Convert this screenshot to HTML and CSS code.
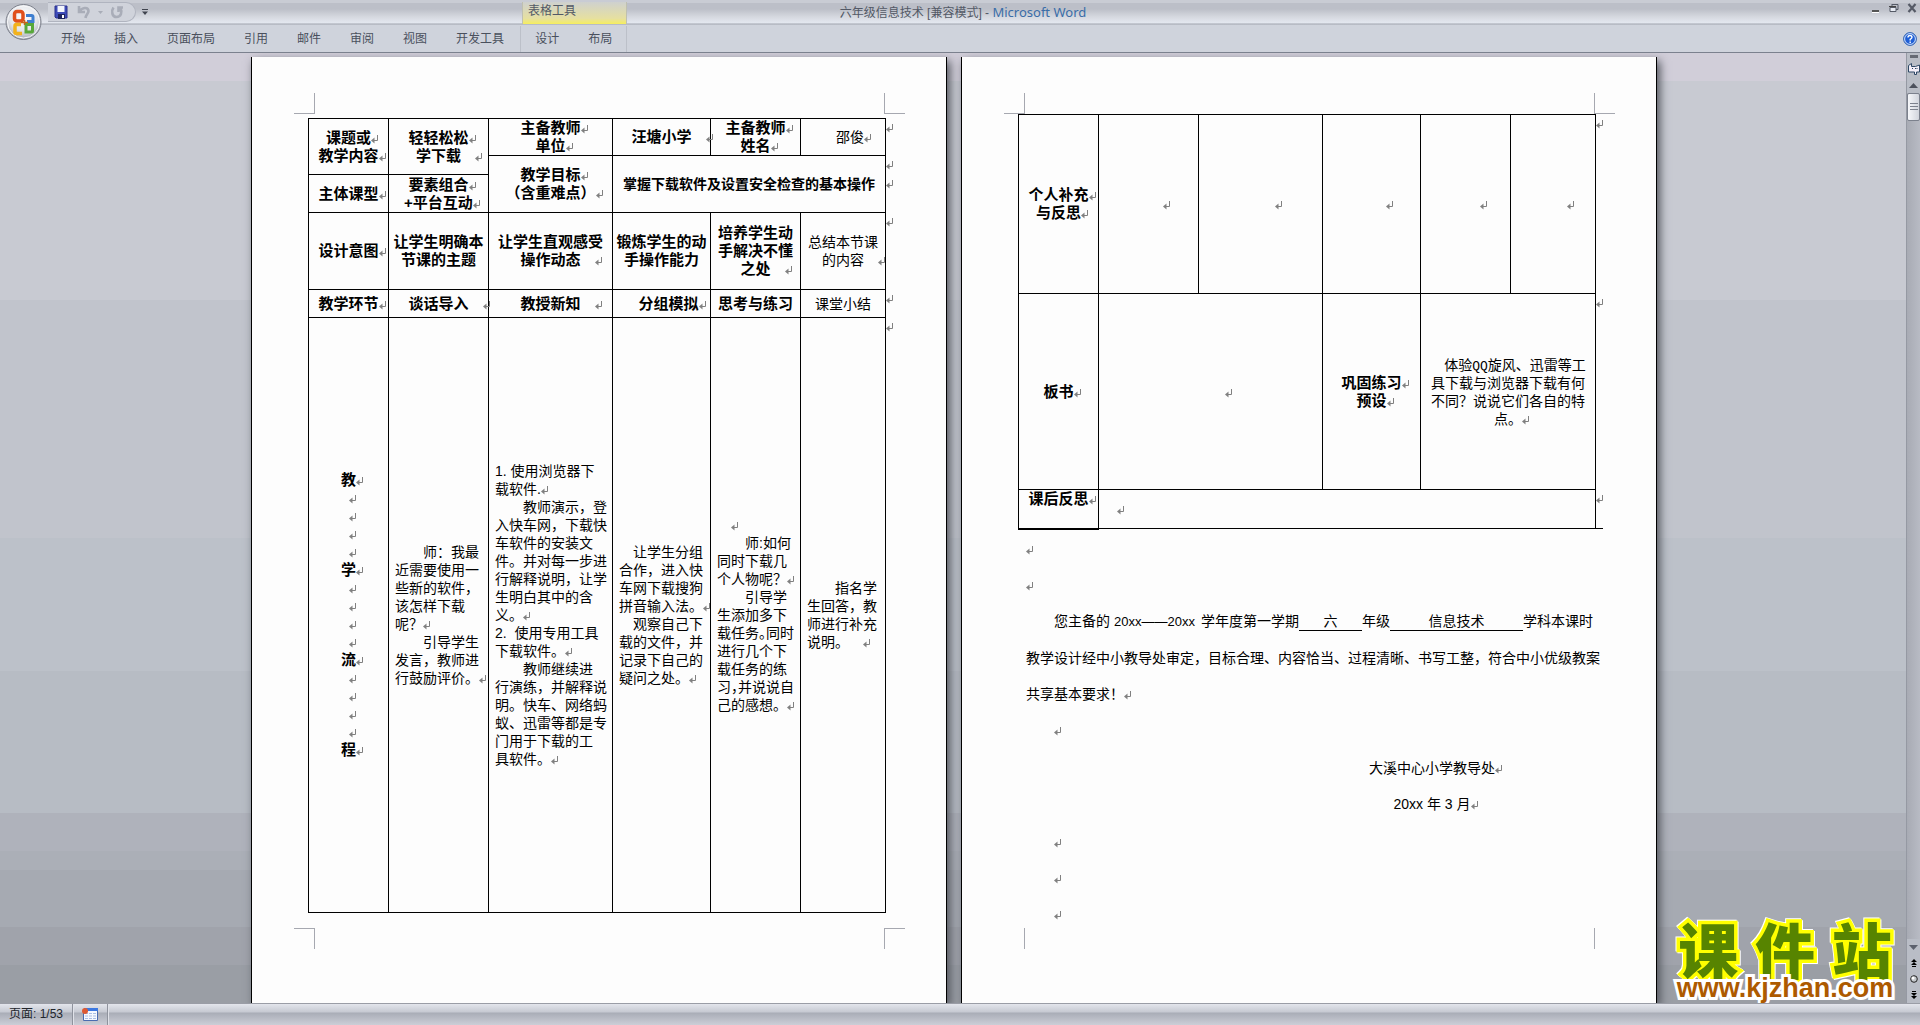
FILE: index.html
```html
<!DOCTYPE html>
<html lang="zh-CN">
<head>
<meta charset="utf-8">
<title>六年级信息技术 [兼容模式] - Microsoft Word</title>
<link rel="stylesheet" href="styles.css">
</head>
<body>
<svg class="defs" aria-hidden="true">
  <symbol id="ret" viewBox="0 0 8 9"><path d="M6.5 0V5.5H3" fill="none" stroke="#808080"/><path d="M0 5.5L3.500 2.500V8.500Z" fill="#808080"/></symbol>
</svg>

<header class="ribbon">
  <button class="office" aria-label="Office 按钮">
    <svg viewBox="0 0 38 38">
      <defs><radialGradient id="orb" cx=".5" cy=".35" r=".65"><stop offset="0" stop-color="#fff"/><stop offset=".6" stop-color="#e4e6eb"/><stop offset="1" stop-color="#a4a8b2"/></radialGradient></defs>
      <circle cx="18.500" cy="19" r="17.500" fill="url(#orb)" stroke="#7d818c"/>
      <circle cx="18.500" cy="19" r="16" fill="none" stroke="#f7f8fa"/>
      <g fill="none">
        <rect x="9.500" y="8.500" width="8.500" height="9.500" rx="2.500" stroke="#e0501c" stroke-width="3.500"/>
        <path d="M21 12.500h5.500q1.500 0 1.500 1.500V18.500h-6" stroke="#3f7fd0" stroke-width="3"/>
        <path d="M21 21.500h6.500v6.500q0 1-1 1H21z" stroke="#58a83a" stroke-width="3"/>
        <path d="M16 21.500h-4.500q-1.500 0-1.500 1.500v6q0 1.500 1.500 1.500h5.500" stroke="#f2b21c" stroke-width="3.500"/>
      </g>
      <path d="M19.500 17v5M16 19.500h7" stroke="#c8641e" stroke-width="1.500"/>
    </svg>
  </button>
  <div class="titlebar">
    <div class="quick">
      <button aria-label="保存"><svg width="14" height="14" viewBox="0 0 14 14"><path d="M1 1h12v12H2l-1-1z" fill="#3d4bb8" stroke="#2a318c"/><path d="M3.500 1h7v6h-7z" fill="#f2f5fc"/><path d="M4 9h7v5H4z" fill="#1d2460"/><path d="M8 10h2v3H8z" fill="#fff"/></svg></button>
      <button aria-label="撤消"><svg width="14" height="14" viewBox="0 0 14 14"><path d="M2 1v6h6M2.500 6.500C5 2.500 11 1.500 11.500 6 11.500 8.500 9 9.500 8.500 13" fill="none" stroke="#a9adb8" stroke-width="2.600"/></svg></button>
      <svg class="caret" width="5" height="3" viewBox="0 0 5 3"><path d="M0 0h5L2.500 3z" fill="#a9adb8"/></svg>
      <button aria-label="重复"><svg width="14" height="14" viewBox="0 0 14 14"><path d="M3.500 2.500C1 6 2 12 6.500 12S12.500 7 10.500 3M13 2.500H8.500V7" fill="none" stroke="#a9adb8" stroke-width="2.600"/></svg></button>
    </div>
    <button class="more" aria-label="自定义快速访问工具栏"><svg width="6" height="6" viewBox="0 0 6 6"><path d="M0 0h6v1H0zM0 2.500h6L3 6z" fill="#40444f"/></svg></button>
    <div class="context">表格工具</div>
    <h1 class="caption">六年级信息技术 [兼容模式] - <span>Microsoft Word</span></h1>
    <div class="winbtns">
      <button aria-label="最小化"><svg width="10" height="10" viewBox="0 0 10 10"><path d="M1 7h7v2H1z" fill="#555"/><path d="M1 9.500h7" stroke="#fff"/></svg></button>
      <button aria-label="还原"><svg width="10" height="10" viewBox="0 0 10 10"><path d="M3 1.500h6v5H7M3 3V1" fill="none" stroke="#555a66"/><path d="M1 4.500h6v4H1z" fill="#e8ecf4" stroke="#555a66"/><path d="M0 3.500h7" stroke="#444" /></svg></button>
      <button aria-label="关闭"><svg width="10" height="10" viewBox="0 0 10 10"><path d="M1.500 1l7 8M8.500 1l-7 8" stroke="#555a66" stroke-width="2.200"/></svg></button>
    </div>
  </div>
  <nav class="tabs">
    <button>开始</button><button>插入</button><button>页面布局</button><button>引用</button><button>邮件</button><button>审阅</button><button>视图</button><button>开发工具</button>
    <span class="ctxtabs"><button>设计</button><button>布局</button></span>
    <button class="help" aria-label="帮助"><svg width="14" height="14" viewBox="0 0 14 14"><circle cx="7" cy="7" r="6.400" fill="#1f5fd6" stroke="#3a68b0"/><circle cx="7" cy="7" r="5.400" fill="none" stroke="#d6e4fa"/><path d="M5 5.500Q5 3.500 7 3.500T9 5.300Q9 6.300 7.200 7.300V8.500M7.200 9.500v1.500" fill="none" stroke="#fff" stroke-width="1.400"/></svg></button>
  </nav>
</header>

<main class="workspace">
  <div class="desk">
    <section class="page">
      <i class="crop tl"></i><i class="crop tr"></i><i class="crop bl"></i><i class="crop br"></i>
      <table class="plan plan-a">
        <colgroup><col class="c80"><col class="c100"><col class="c124"><col class="c98"><col class="c90"><col class="c85"><col class="c7"></colgroup>
        <tr class="r37">
          <th rowspan="2">课题或<svg class="ret"><use href="#ret"/></svg><br>教学内容<svg class="ret"><use href="#ret"/></svg></th>
          <th rowspan="2">轻轻松松<svg class="ret"><use href="#ret"/></svg><br>学下载<svg class="ret far"><use href="#ret"/></svg></th>
          <th>主备教师<svg class="ret"><use href="#ret"/></svg><br>单位<svg class="ret"><use href="#ret"/></svg></th>
          <th>汪塘小学<svg class="ret far"><use href="#ret"/></svg></th>
          <th>主备教师<svg class="ret"><use href="#ret"/></svg><br>姓名<svg class="ret"><use href="#ret"/></svg></th>
          <td class="mid in">邵俊<svg class="ret"><use href="#ret"/></svg></td>
          <td class="end"><svg class="ret"><use href="#ret"/></svg></td>
        </tr>
        <tr class="r19">
          <th rowspan="2">教学目标<svg class="ret"><use href="#ret"/></svg><br>（含重难点）<svg class="ret"><use href="#ret"/></svg></th>
          <th rowspan="2" colspan="3" class="goal">掌握下载软件及设置安全检查的基本操作</th>
          <td class="end"><svg class="ret"><use href="#ret"/></svg></td>
        </tr>
        <tr class="r38">
          <th>主体课型<svg class="ret"><use href="#ret"/></svg></th>
          <th>要素组合<svg class="ret"><use href="#ret"/></svg><br>+平台互动<svg class="ret"><use href="#ret"/></svg></th>
          <td class="end"><svg class="ret"><use href="#ret"/></svg></td>
        </tr>
        <tr class="r77">
          <th>设计意图<svg class="ret"><use href="#ret"/></svg></th>
          <th>让学生明确本<br>节课的主题</th>
          <th>让学生直观感受<br>操作动态<svg class="ret far"><use href="#ret"/></svg></th>
          <th>锻炼学生的动<br>手操作能力</th>
          <th>培养学生动<br>手解决不懂<br>之处<svg class="ret far"><use href="#ret"/></svg></th>
          <td class="mid">总结本节课<br>的内容<svg class="ret far"><use href="#ret"/></svg></td>
          <td class="end"><svg class="ret"><use href="#ret"/></svg></td>
        </tr>
        <tr class="r28">
          <th>教学环节<svg class="ret"><use href="#ret"/></svg></th>
          <th>谈话导入<svg class="ret far"><use href="#ret"/></svg></th>
          <th>教授新知<svg class="ret far"><use href="#ret"/></svg></th>
          <th class="in">分组模拟<svg class="ret"><use href="#ret"/></svg></th>
          <th>思考与练习</th>
          <td class="mid">课堂小结</td>
          <td class="end"><svg class="ret"><use href="#ret"/></svg></td>
        </tr>
        <tr class="r595">
          <th>教<svg class="ret"><use href="#ret"/></svg><br><svg class="ret"><use href="#ret"/></svg><br><svg class="ret"><use href="#ret"/></svg><br><svg class="ret"><use href="#ret"/></svg><br><svg class="ret"><use href="#ret"/></svg><br>学<svg class="ret"><use href="#ret"/></svg><br><svg class="ret"><use href="#ret"/></svg><br><svg class="ret"><use href="#ret"/></svg><br><svg class="ret"><use href="#ret"/></svg><br><svg class="ret"><use href="#ret"/></svg><br>流<svg class="ret"><use href="#ret"/></svg><br><svg class="ret"><use href="#ret"/></svg><br><svg class="ret"><use href="#ret"/></svg><br><svg class="ret"><use href="#ret"/></svg><br><svg class="ret"><use href="#ret"/></svg><br>程<svg class="ret"><use href="#ret"/></svg></th>
          <td><p class="i2">师：我最<br>近需要使用一<br>些新的软件，<br>该怎样下载<br>呢？<svg class="ret"><use href="#ret"/></svg></p><p class="i2">引导学生<br>发言，教师进<br>行鼓励评价。<svg class="ret"><use href="#ret"/></svg></p></td>
          <td><p>1. 使用浏览器下<br>载软件.<svg class="ret"><use href="#ret"/></svg></p><p class="i2">教师演示，登<br>入快车网，下载快<br>车软件的安装文<br>件。并对每一步进<br>行解释说明，让学<br>生明白其中的含<br>义。<svg class="ret"><use href="#ret"/></svg></p><p>2.&nbsp; 使用专用工具<br>下载软件。<svg class="ret"><use href="#ret"/></svg></p><p class="i2">教师继续进<br>行演练，并解释说<br>明。快车、网络蚂<br>蚁、迅雷等都是专<br>门用于下载的工<br>具软件。<svg class="ret"><use href="#ret"/></svg></p></td>
          <td><p class="i1">让学生分组<br>合作，进入快<br>车网下载搜狗<br>拼音输入法。<svg class="ret"><use href="#ret"/></svg></p><p class="i1">观察自己下<br>载的文件，并<br>记录下自己的<br>疑问之处。<svg class="ret"><use href="#ret"/></svg></p></td>
          <td><p class="i1"><svg class="ret"><use href="#ret"/></svg></p><p class="i2">师:如何<br>同时下载几<br>个人物呢？<svg class="ret"><use href="#ret"/></svg></p><p class="i2">引导学<br>生添加多下<br>载任务<span class="half">。</span>同时<br>进行几个下<br>载任务的练<br>习<span class="half">，</span>并说说自<br>己的感想。<svg class="ret"><use href="#ret"/></svg></p></td>
          <td><p class="i2">指名学<br>生回答，教<br>师进行补充<br>说明。<svg class="ret far"><use href="#ret"/></svg></p></td>
          <td class="end"><svg class="ret"><use href="#ret"/></svg></td>
        </tr>
      </table>
    </section>

    <section class="page">
      <i class="crop tl"></i><i class="crop tr"></i><i class="crop bl short"></i><i class="crop br short"></i>
      <table class="plan">
        <colgroup><col class="c80"><col class="c100"><col class="c124"><col class="c98"><col class="c90"><col class="c85"><col class="c7"></colgroup>
        <tr class="r179">
          <th>个人补充<svg class="ret"><use href="#ret"/></svg><br>与反思<svg class="ret"><use href="#ret"/></svg></th>
          <td class="mid"><svg class="ret far"><use href="#ret"/></svg></td>
          <td class="mid"><svg class="ret far"><use href="#ret"/></svg></td>
          <td class="mid"><svg class="ret far"><use href="#ret"/></svg></td>
          <td class="mid"><svg class="ret far"><use href="#ret"/></svg></td>
          <td class="mid"><svg class="ret far"><use href="#ret"/></svg></td>
          <td class="end"><svg class="ret"><use href="#ret"/></svg></td>
        </tr>
        <tr class="r196">
          <th>板书<svg class="ret"><use href="#ret"/></svg></th>
          <td colspan="2" class="mid"><svg class="ret far"><use href="#ret"/></svg></td>
          <th>巩固练习<svg class="ret"><use href="#ret"/></svg><br>预设<svg class="ret"><use href="#ret"/></svg></th>
          <td colspan="2" class="mid"><p class="i1">体验<span class="mono">QQ</span>旋风、迅雷等工<br>具下载与浏览器下载有何<br>不同？说说它们各自的特<br>点。<svg class="ret"><use href="#ret"/></svg></p></td>
          <td class="end"><svg class="ret"><use href="#ret"/></svg></td>
        </tr>
        <tr class="r39">
          <th class="last">课后反思<svg class="ret"><use href="#ret"/></svg></th>
          <td colspan="5" class="note"><svg class="ret"><use href="#ret"/></svg></td>
          <td class="end under"><svg class="ret"><use href="#ret"/></svg></td>
        </tr>
      </table>
      <div class="letter">
        <p><svg class="ret"><use href="#ret"/></svg></p>
        <p><svg class="ret"><use href="#ret"/></svg></p>
        <p class="i2">您主备的<span class="years">20xx——20xx</span>学年度第一学期<span class="blank grade">六</span>年级<span class="blank subject">信息技术</span>学科本课时<br>教学设计经中小教导处审定，目标合理、内容恰当、过程清晰、书写工整，符合中小优级教案<br>共享基本要求！<svg class="ret"><use href="#ret"/></svg></p>
        <p class="i2"><svg class="ret"><use href="#ret"/></svg></p>
        <div class="sign"><p>大溪中心小学教导处<svg class="ret"><use href="#ret"/></svg></p><p>20xx 年 3 月<svg class="ret"><use href="#ret"/></svg></p></div>
        <p class="i2"><svg class="ret"><use href="#ret"/></svg></p>
        <p class="i2"><svg class="ret"><use href="#ret"/></svg></p>
        <p class="i2"><svg class="ret"><use href="#ret"/></svg></p>
      </div>
    </section>
  </div>

  <aside class="scroll">
    <svg class="split" width="8" height="8" viewBox="0 0 8 8"><path d="M0 2h8v3H0z" fill="#666a74"/></svg>
    <button class="ruler" aria-label="标尺"><svg width="12" height="12" viewBox="0 0 12 12"><path d="M.500 2.500L3.500.500V3.500h4L11.500 2v7h-3v2.500h-2V9h-6z" fill="#f3eef8" stroke="#2f4866"/><path d="M4 5l1 1M7 5l1 1M9 6V5" stroke="#2f4866"/></svg></button>
    <button class="up" aria-label="向上滚动"><svg width="9" height="5" viewBox="0 0 9 5"><path d="M0 5h9L4.500 0z" fill="#4c515c"/></svg></button>
    <div class="track"><div class="thumb"></div></div>
    <button class="down" aria-label="向下滚动"><svg width="9" height="5" viewBox="0 0 9 5"><path d="M0 0h9L4.500 5z" fill="#5c616d"/></svg></button>
    <button class="nav" aria-label="前一页"><svg width="6" height="8" viewBox="0 0 6 8"><path d="M3 0l3 3H0zM3 3l3 3H0zM1 7h4v1H1z" fill="#000"/></svg></button>
    <button class="nav" aria-label="选择浏览对象"><svg width="8" height="8" viewBox="0 0 8 8"><circle cx="4" cy="4" r="3.300" fill="#c4c8cc" stroke="#222"/><circle cx="3" cy="3" r="1.500" fill="#fff"/></svg></button>
    <button class="nav" aria-label="下一页"><svg width="6" height="8" viewBox="0 0 6 8"><path d="M3 8l3-3H0zM3 5l3-3H0zM1 0h4v1H1z" fill="#000"/></svg></button>
  </aside>

  <div class="mark"><strong><b>课</b><b>件</b><b>站</b></strong><span>www.kjzhan.com</span></div>
</main>

<footer class="status">
  <span class="cell">页面: 1/53</span>
  <button class="cell" aria-label="宏"><svg width="16" height="13" viewBox="0 0 16 13"><path d="M1.500 1.500h14v11h-14z" fill="#f5f8fe" stroke="#4a6cb0"/><path d="M2 0h14v3H2z" fill="#3c78e0"/><path d="M3 5.500h11M3 8h11M3 10.500h11" stroke="#a9bfe6" stroke-dasharray="3 1"/><circle cx="3" cy="3" r="3" fill="#dd5a33"/></svg></button>
</footer>
</body>
</html>
```
FILE: styles.css
```css
* { box-sizing: border-box; }
body {
  margin: 0;
  height: 100vh;
  display: flex;
  flex-direction: column;
  overflow: hidden;
  font-family: "Liberation Sans", "Noto Sans CJK SC", sans-serif;
  font-size: 14px;
  line-height: 18px;
  color: #000;
}
button {
  border: 0;
  padding: 0;
  margin: 0;
  background: none;
  font: inherit;
  color: inherit;
}
p { margin: 0; }
svg { flex: none; }
.defs { display: none; }

/* Ribbon */
.ribbon {
  flex: none;
  display: grid;
  grid-template: 24px 28px / 48px 1fr;
  background: linear-gradient(#c9ccd4 0 3px, #bcbfc8 3px 9px, #c6c9d1 12px, #d6d9e0 17px, #e4e8f0 23px, #a0a4ae 24px, #cfd3dc 25px);
  border-bottom: 1px solid #7b818e;
}
.office { grid-row: 1 / 3; padding: 3px 0 0 5px; align-self: start; }
.office svg { display: block; width: 38px; height: 38px; }
.titlebar { display: flex; position: relative; color: #535966; font-size: 12px; }
.quick {
  display: flex;
  align-items: center;
  gap: 9px;
  width: 88px;
  height: 20px;
  margin-top: 2px;
  padding-left: 6px;
  border: 1px solid #b0b4bf;
  border-left: 0;
  border-radius: 0 10px 10px 0;
  background: #d0d3db;
}
.quick button, .more, .winbtns button { display: flex; }
.caret { margin: 0 -2px; }
.more { margin: 9px 0 0 6px; }
.context {
  margin-left: 374px;
  margin-top: 2px;
  width: 105px;
  padding: 0 5px;
  line-height: 18px;
  height: 22px;
  border: solid #bfc0b0;
  border-width: 0 1px;
  background: linear-gradient(#cfd1cf, #e6e0a0 75%, #f6ee5e);
}
.caption {
  position: absolute;
  left: 0;
  right: 42px;
  margin: 0;
  text-align: center;
  font-size: 12px;
  font-weight: 400;
  line-height: 24px;
  pointer-events: none;
}
.caption span { font-family: "Noto Sans", sans-serif; font-size: 13px; color: #3a6da8; }
.winbtns { margin-left: auto; display: flex; gap: 8px; padding: 3px 3px 0 0; }
.tabs {
  display: flex;
  align-items: center;
  gap: 29px;
  padding: 2px 3px 0 13px;
  font-size: 12px;
  color: #4a505d;
}
.ctxtabs {
  display: flex;
  align-items: center;
  align-self: stretch;
  gap: 29px;
  margin-left: -13px;
  padding: 0 14px;
  border: solid #bcc0c9;
  border-width: 0 1px;
}
.help { margin-left: auto; display: flex; }

/* Document area */
.workspace { flex: 1; min-height: 0; display: flex; position: relative; overflow: hidden; }
.desk {
  flex: 1;
  display: flex;
  justify-content: center;
  gap: 14px;
  padding: 4px 0 0 2px;
  background: linear-gradient(#d1ced9 0 28px, #c8cad2 28px 26%, #c1c4cc 26% 51%, #bcc1c9 51% 65%, #b7bcc4 65% 80%, #afb2bb 80% 84%, #abafb7 84% 86%, #a6aab2 86% 92%, #a0a3ab 92% 96%, #9a9ea5 96%);
}
.page {
  position: relative;
  flex: 0 1 696px;
  padding: 57px 0 0 56px;
  background: #fdfdfd;
  border: solid #000;
  border-width: 0 1px;
  box-shadow: 3px 4px 9px #50535b;
}
.crop { position: absolute; width: 21px; height: 21px; border: 0 solid #a6a8b0; }
.tl { top: 36px; left: 42px; border-width: 0 1px 1px 0; }
.tr { top: 36px; right: 41px; border-width: 0 0 1px 1px; }
.bl { top: 871px; left: 42px; border-width: 1px 1px 0 0; }
.br { top: 871px; right: 41px; border-width: 1px 0 0 1px; }
.short { border-top-width: 0; }

.ret { width: 8px; height: 9px; margin: 0 -8px 0 0; overflow: visible; vertical-align: -1px; }
.far { margin: 0 -22px 0 14px; }

.plan { border-collapse: collapse; table-layout: fixed; width: 584px; }
.plan-a { margin-top: 4px; }
.c80 { width: 80px; }
.c100 { width: 100px; }
.c124 { width: 124px; }
.c98 { width: 98px; }
.c90 { width: 90px; }
.c85 { width: 85px; }
.c7 { width: 7px; }
.r37 { height: 37px; }
.r19 { height: 19px; }
.r38 { height: 38px; }
.r77 { height: 77px; }
.r28 { height: 28px; }
.r595 { height: 595px; }
.r179 { height: 179px; }
.r196 { height: 196px; }
.r39 { height: 39px; }
.plan th, .plan td { border: 1px solid #000; padding: 0; white-space: nowrap; vertical-align: middle; }
.plan th { font-size: 15px; font-weight: 700; text-align: center; }
.plan td { padding-left: 6px; }
.plan .goal { font-size: 14px; }
.plan .mid { padding-left: 0; text-align: center; }
.plan .in { padding-left: 14px; }
.plan .end { border: 0; padding: 0; vertical-align: top; line-height: 16px; }
.plan .under { border-bottom: 1px solid #000; }
.plan .last { vertical-align: top; border-bottom-width: 2px; }
.plan .note { padding-left: 18px; }
.i1 { text-indent: 14px; }
.i2 { text-indent: 28px; }
.half { font-family: "Noto Sans CJK SC", sans-serif; font-feature-settings: "halt"; line-height: 1; }
.mono { font-family: "Liberation Mono", monospace; font-size: 13px; line-height: 1; }

.letter { padding: 1px 0 0 8px; line-height: 36px; white-space: nowrap; }
.years { margin: 0 6px 0 4px; font-size: 13px; }
.blank { display: inline-block; line-height: 18px; text-align: center; text-indent: 0; border-bottom: 1px solid #000; }
.grade { width: 63px; }
.subject { width: 133px; }
.sign { width: 126px; margin: 2px 0 2px 343px; text-align: center; }

/* Scroll bar */
.scroll {
  flex: none;
  width: 14px;
  display: flex;
  flex-direction: column;
  align-items: center;
  background: #b9bdc6;
  border-left: 1px solid #9599a3;
}
.scroll button { display: flex; flex: none; justify-content: center; align-items: center; width: 100%; height: 16px; }
.track { flex: 1; width: 100%; background: linear-gradient(90deg, #a8abb4, #b8bbc4); }
.thumb {
  height: 28px;
  border: 1px solid #7c818d;
  border-radius: 2px;
  background: repeating-linear-gradient(#7c818d 0 1px, transparent 1px 3px) center / 8px 9px no-repeat, linear-gradient(90deg, #f6f7fa, #d2d5dd);
}

/* Site watermark over the lower right corner */
.mark { position: absolute; right: 20px; bottom: 0; width: 230px; }
.mark strong, .mark span { display: block; paint-order: stroke fill; font-weight: 900; text-align: center; }
.mark strong {
  display: flex;
  justify-content: space-around;
  font-family: "Noto Sans CJK SC", sans-serif;
  font-size: 60px;
  line-height: 54px;
  color: #578400;
  -webkit-text-stroke: 7px #ff0;
  filter: drop-shadow(1px 1px 0 #fff) drop-shadow(-1px -1px 0 #fff);
}
.mark b { font-weight: 900; }
.mark span { font-size: 27px; line-height: 26px; padding-bottom: 2px; color: #ad5a00; -webkit-text-stroke: 6px #fff; position: relative; }

/* Status bar */
.status {
  flex: none;
  display: flex;
  height: 22px;
  border-top: 1px solid #9a9da6;
  background: linear-gradient(#e3e5ec, #c6c9d2 8px, #a9adb7 9px, #ccced7);
  font-size: 12px;
  line-height: 21px;
  color: #22252c;
}
.cell { display: flex; align-items: center; padding: 0 9px; border-right: 1px solid #8f939d; box-shadow: 1px 0 #e0e2e9; }
```
